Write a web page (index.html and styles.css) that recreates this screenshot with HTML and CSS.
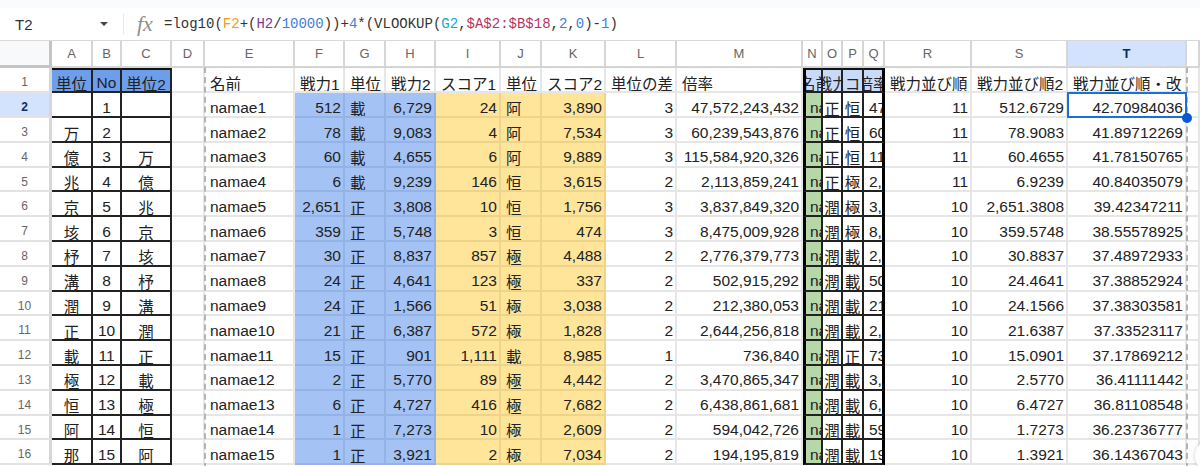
FILE: index.html
```html
<!DOCTYPE html>
<html lang="ja">

<head>
  <meta charset="UTF-8">
  <meta name="viewport" content="width=device-width, initial-scale=1.0">
  <title>Spreadsheet</title>
  <link rel="stylesheet" href="styles.css">
</head>

<body>
  <div class="top-band"></div>
  <div class="formula-bar">
    <div class="name-box">T2</div>
    <div class="name-arrow"></div>
    <div class="bar-sep"></div>
    <div class="fx">fx</div>
    <div class="formula">=log10(<span class="f-orange">F2</span>+(<span class="f-purple">H2</span>/<span class="f-blue">10000</span>))+<span class="f-blue">4</span>*(VLOOKUP(<span class="f-teal">G2</span>,<span class="f-red">$A$2:$B$18</span>,<span class="f-blue">2</span>,<span class="f-blue">0</span>)-<span class="f-blue">1</span>)</div>
  </div>

  <div class="sheet">
    <!-- column headers -->
    <div class="corner"></div>
    <div class="col">A</div><div class="col">B</div><div class="col">C</div><div class="col">D</div><div class="col">E</div><div class="col">F</div><div class="col">G</div><div class="col">H</div><div class="col">I</div><div class="col">J</div><div class="col">K</div><div class="col">L</div><div class="col">M</div><div class="col">N</div><div class="col">O</div><div class="col">P</div><div class="col">Q</div><div class="col">R</div><div class="col">S</div><div class="col col-on">T</div><div class="col"></div>

    <!-- row 1 -->
    <div class="row-no">1</div>
    <div class="c mid k k-top hd">単位</div><div class="c mid k k-top hd">No</div><div class="c mid k k-top hd">単位2</div><div class="c"></div>
    <div class="c">名前</div><div class="c">戦力1</div><div class="c">単位</div><div class="c">戦力2</div><div class="c">スコア1</div><div class="c">単位</div><div class="c">スコア2</div><div class="c">単位の差</div><div class="c">倍率</div>
    <div class="c mid k k-top k-left lb">名前</div><div class="c mid k k-top lb">戦力</div><div class="c mid k k-top lb">スコア</div><div class="c mid k k-top k-right lb">倍率</div>
    <div class="c">戦力並び順</div><div class="c">戦力並び順2</div><div class="c">戦力並び順・改</div><div class="c"></div>

    <!-- row 2 -->
    <div class="row-no row-on">2</div>
    <div class="c mid k"></div><div class="c mid k">1</div><div class="c mid k"></div><div class="c"></div>
    <div class="c">namae1</div><div class="c num bl">512</div><div class="c bl">載</div><div class="c num bl">6,729</div><div class="c num ye">24</div><div class="c ye">阿</div><div class="c num ye">3,890</div><div class="c num">3</div><div class="c num">47,572,243,432</div>
    <div class="c k k-left gr">namae1</div><div class="c mid k">正</div><div class="c mid k">恒</div><div class="c k k-right">47,572,243,432</div>
    <div class="c num">11</div><div class="c num">512.6729</div><div class="c num">42.70984036</div><div class="c"></div>

    <!-- row 3 -->
    <div class="row-no">3</div>
    <div class="c mid k">万</div><div class="c mid k">2</div><div class="c mid k"></div><div class="c"></div>
    <div class="c">namae2</div><div class="c num bl">78</div><div class="c bl">載</div><div class="c num bl">9,083</div><div class="c num ye">4</div><div class="c ye">阿</div><div class="c num ye">7,534</div><div class="c num">3</div><div class="c num">60,239,543,876</div>
    <div class="c k k-left gr">namae2</div><div class="c mid k">正</div><div class="c mid k">恒</div><div class="c k k-right">60,239,543,876</div>
    <div class="c num">11</div><div class="c num">78.9083</div><div class="c num">41.89712269</div><div class="c"></div>

    <!-- row 4 -->
    <div class="row-no">4</div>
    <div class="c mid k">億</div><div class="c mid k">3</div><div class="c mid k">万</div><div class="c"></div>
    <div class="c">namae3</div><div class="c num bl">60</div><div class="c bl">載</div><div class="c num bl">4,655</div><div class="c num ye">6</div><div class="c ye">阿</div><div class="c num ye">9,889</div><div class="c num">3</div><div class="c num">115,584,920,326</div>
    <div class="c k k-left gr">namae3</div><div class="c mid k">正</div><div class="c mid k">恒</div><div class="c k k-right">115,584,920,326</div>
    <div class="c num">11</div><div class="c num">60.4655</div><div class="c num">41.78150765</div><div class="c"></div>

    <!-- row 5 -->
    <div class="row-no">5</div>
    <div class="c mid k">兆</div><div class="c mid k">4</div><div class="c mid k">億</div><div class="c"></div>
    <div class="c">namae4</div><div class="c num bl">6</div><div class="c bl">載</div><div class="c num bl">9,239</div><div class="c num ye">146</div><div class="c ye">恒</div><div class="c num ye">3,615</div><div class="c num">2</div><div class="c num">2,113,859,241</div>
    <div class="c k k-left gr">namae4</div><div class="c mid k">正</div><div class="c mid k">極</div><div class="c k k-right">2,113,859,241</div>
    <div class="c num">11</div><div class="c num">6.9239</div><div class="c num">40.84035079</div><div class="c"></div>

    <!-- row 6 -->
    <div class="row-no">6</div>
    <div class="c mid k">京</div><div class="c mid k">5</div><div class="c mid k">兆</div><div class="c"></div>
    <div class="c">namae5</div><div class="c num bl">2,651</div><div class="c bl">正</div><div class="c num bl">3,808</div><div class="c num ye">10</div><div class="c ye">恒</div><div class="c num ye">1,756</div><div class="c num">3</div><div class="c num">3,837,849,320</div>
    <div class="c k k-left gr">namae5</div><div class="c mid k">潤</div><div class="c mid k">極</div><div class="c k k-right">3,837,849,320</div>
    <div class="c num">10</div><div class="c num">2,651.3808</div><div class="c num">39.42347211</div><div class="c"></div>

    <!-- row 7 -->
    <div class="row-no">7</div>
    <div class="c mid k">垓</div><div class="c mid k">6</div><div class="c mid k">京</div><div class="c"></div>
    <div class="c">namae6</div><div class="c num bl">359</div><div class="c bl">正</div><div class="c num bl">5,748</div><div class="c num ye">3</div><div class="c ye">恒</div><div class="c num ye">474</div><div class="c num">3</div><div class="c num">8,475,009,928</div>
    <div class="c k k-left gr">namae6</div><div class="c mid k">潤</div><div class="c mid k">極</div><div class="c k k-right">8,475,009,928</div>
    <div class="c num">10</div><div class="c num">359.5748</div><div class="c num">38.55578925</div><div class="c"></div>

    <!-- row 8 -->
    <div class="row-no">8</div>
    <div class="c mid k">杼</div><div class="c mid k">7</div><div class="c mid k">垓</div><div class="c"></div>
    <div class="c">namae7</div><div class="c num bl">30</div><div class="c bl">正</div><div class="c num bl">8,837</div><div class="c num ye">857</div><div class="c ye">極</div><div class="c num ye">4,488</div><div class="c num">2</div><div class="c num">2,776,379,773</div>
    <div class="c k k-left gr">namae7</div><div class="c mid k">潤</div><div class="c mid k">載</div><div class="c k k-right">2,776,379,773</div>
    <div class="c num">10</div><div class="c num">30.8837</div><div class="c num">37.48972933</div><div class="c"></div>

    <!-- row 9 -->
    <div class="row-no">9</div>
    <div class="c mid k">溝</div><div class="c mid k">8</div><div class="c mid k">杼</div><div class="c"></div>
    <div class="c">namae8</div><div class="c num bl">24</div><div class="c bl">正</div><div class="c num bl">4,641</div><div class="c num ye">123</div><div class="c ye">極</div><div class="c num ye">337</div><div class="c num">2</div><div class="c num">502,915,292</div>
    <div class="c k k-left gr">namae8</div><div class="c mid k">潤</div><div class="c mid k">載</div><div class="c k k-right">502,915,292</div>
    <div class="c num">10</div><div class="c num">24.4641</div><div class="c num">37.38852924</div><div class="c"></div>

    <!-- row 10 -->
    <div class="row-no">10</div>
    <div class="c mid k">潤</div><div class="c mid k">9</div><div class="c mid k">溝</div><div class="c"></div>
    <div class="c">namae9</div><div class="c num bl">24</div><div class="c bl">正</div><div class="c num bl">1,566</div><div class="c num ye">51</div><div class="c ye">極</div><div class="c num ye">3,038</div><div class="c num">2</div><div class="c num">212,380,053</div>
    <div class="c k k-left gr">namae9</div><div class="c mid k">潤</div><div class="c mid k">載</div><div class="c k k-right">212,380,053</div>
    <div class="c num">10</div><div class="c num">24.1566</div><div class="c num">37.38303581</div><div class="c"></div>

    <!-- row 11 -->
    <div class="row-no">11</div>
    <div class="c mid k">正</div><div class="c mid k">10</div><div class="c mid k">潤</div><div class="c"></div>
    <div class="c">namae10</div><div class="c num bl">21</div><div class="c bl">正</div><div class="c num bl">6,387</div><div class="c num ye">572</div><div class="c ye">極</div><div class="c num ye">1,828</div><div class="c num">2</div><div class="c num">2,644,256,818</div>
    <div class="c k k-left gr">namae10</div><div class="c mid k">潤</div><div class="c mid k">載</div><div class="c k k-right">2,644,256,818</div>
    <div class="c num">10</div><div class="c num">21.6387</div><div class="c num">37.33523117</div><div class="c"></div>

    <!-- row 12 -->
    <div class="row-no">12</div>
    <div class="c mid k">載</div><div class="c mid k">11</div><div class="c mid k">正</div><div class="c"></div>
    <div class="c">namae11</div><div class="c num bl">15</div><div class="c bl">正</div><div class="c num bl">901</div><div class="c num ye">1,111</div><div class="c ye">載</div><div class="c num ye">8,985</div><div class="c num">1</div><div class="c num">736,840</div>
    <div class="c k k-left gr">namae11</div><div class="c mid k">潤</div><div class="c mid k">正</div><div class="c k k-right">736,840</div>
    <div class="c num">10</div><div class="c num">15.0901</div><div class="c num">37.17869212</div><div class="c"></div>

    <!-- row 13 -->
    <div class="row-no">13</div>
    <div class="c mid k">極</div><div class="c mid k">12</div><div class="c mid k">載</div><div class="c"></div>
    <div class="c">namae12</div><div class="c num bl">2</div><div class="c bl">正</div><div class="c num bl">5,770</div><div class="c num ye">89</div><div class="c ye">極</div><div class="c num ye">4,442</div><div class="c num">2</div><div class="c num">3,470,865,347</div>
    <div class="c k k-left gr">namae12</div><div class="c mid k">潤</div><div class="c mid k">載</div><div class="c k k-right">3,470,865,347</div>
    <div class="c num">10</div><div class="c num">2.5770</div><div class="c num">36.41111442</div><div class="c"></div>

    <!-- row 14 -->
    <div class="row-no">14</div>
    <div class="c mid k">恒</div><div class="c mid k">13</div><div class="c mid k">極</div><div class="c"></div>
    <div class="c">namae13</div><div class="c num bl">6</div><div class="c bl">正</div><div class="c num bl">4,727</div><div class="c num ye">416</div><div class="c ye">極</div><div class="c num ye">7,682</div><div class="c num">2</div><div class="c num">6,438,861,681</div>
    <div class="c k k-left gr">namae13</div><div class="c mid k">潤</div><div class="c mid k">載</div><div class="c k k-right">6,438,861,681</div>
    <div class="c num">10</div><div class="c num">6.4727</div><div class="c num">36.81108548</div><div class="c"></div>

    <!-- row 15 -->
    <div class="row-no">15</div>
    <div class="c mid k">阿</div><div class="c mid k">14</div><div class="c mid k">恒</div><div class="c"></div>
    <div class="c">namae14</div><div class="c num bl">1</div><div class="c bl">正</div><div class="c num bl">7,273</div><div class="c num ye">10</div><div class="c ye">極</div><div class="c num ye">2,609</div><div class="c num">2</div><div class="c num">594,042,726</div>
    <div class="c k k-left gr">namae14</div><div class="c mid k">潤</div><div class="c mid k">載</div><div class="c k k-right">594,042,726</div>
    <div class="c num">10</div><div class="c num">1.7273</div><div class="c num">36.23736777</div><div class="c"></div>

    <!-- row 16 -->
    <div class="row-no">16</div>
    <div class="c mid k">那</div><div class="c mid k">15</div><div class="c mid k">阿</div><div class="c"></div>
    <div class="c">namae15</div><div class="c num bl">1</div><div class="c bl">正</div><div class="c num bl">3,921</div><div class="c num ye">2</div><div class="c ye">極</div><div class="c num ye">7,034</div><div class="c num">2</div><div class="c num">194,195,819</div>
    <div class="c k k-left gr">namae15</div><div class="c mid k">潤</div><div class="c mid k">載</div><div class="c k k-right">194,195,819</div>
    <div class="c num">10</div><div class="c num">1.3921</div><div class="c num">36.14367043</div><div class="c"></div>

    <!-- overlays -->
    <div class="freeze-line"></div>
    <div class="selection"><div class="handle"></div></div>
    <div class="explore"></div>
  </div>
</body>

</html>
```

FILE: styles.css
```css
html,
body {
  margin: 0;
  height: 466px;
  overflow: hidden;
  background: #fff;
}

body {
  font-family: "Liberation Sans", "Noto Sans CJK JP", sans-serif;
  color: #222;
}

.top-band {
  height: 8px;
  background: #f9fbfd;
}

.formula-bar {
  display: flex;
  align-items: center;
  height: 32px;
  border-bottom: 1px solid #d9d9d9;
}

.name-box {
  width: 85px;
  padding-left: 15px;
  font-size: 15px;
  color: #333;
}

.name-arrow {
  width: 0;
  height: 0;
  border-left: 4px solid transparent;
  border-right: 4px solid transparent;
  border-top: 4px solid #444;
}

.bar-sep {
  width: 1px;
  height: 20px;
  margin-left: 15px;
  background: #e6e6e6;
}

.fx {
  width: 27px;
  margin-left: 13px;
  font-family: "Liberation Serif", serif;
  font-size: 22px;
  font-style: italic;
  color: #8f8f8f;
}

.formula {
  font-family: "Liberation Mono", monospace;
  font-size: 14px;
  white-space: nowrap;
  color: #333;
}

.f-orange { color: #f7981d; }
.f-purple { color: #7e3794; }
.f-blue { color: #3d7fd9; }
.f-teal { color: #11a9cc; }
.f-red { color: #b5345f; }

.sheet {
  position: relative;
  display: grid;
  grid-template-columns: 52px 41px 29px 50px 33px 90px 50px 41px 50px 65px 41px 64px 71px 126px 20px 20px 21px 21px 87px 96px 119px 13px;
  grid-template-rows: 27px 25.3px repeat(15, 24.8px);
  font-size: 15.5px;
}

.corner {
  box-sizing: border-box;
  background: #f8f9fa;
  border-right: 3px solid #c4c4c4;
  border-bottom: 3px solid #c4c4c4;
}

.col {
  display: flex;
  align-items: center;
  justify-content: center;
  box-sizing: border-box;
  border-right: 2px solid #d6d6d6;
  border-bottom: 2px solid #d6d6d6;
  font-size: 13px;
  color: #666;
}

.col-on {
  background: #d3e3fd;
  color: #0b2e5c;
  font-weight: bold;
}

.row-no {
  display: flex;
  align-items: center;
  justify-content: center;
  box-sizing: border-box;
  padding-top: 5px;
  border-right: 3px solid #d6d6d6;
  border-bottom: 2px solid #e2e2e2;
  font-size: 12px;
  color: #666;
}

.row-on {
  background: #d3e3fd;
  color: #0b2e5c;
  font-weight: bold;
}

.c {
  display: flex;
  align-items: center;
  box-sizing: border-box;
  padding: 6px 2px 0 5px;
  overflow: hidden;
  white-space: nowrap;
  border-right: 2px solid #e6e6e6;
  border-bottom: 2px solid #e6e6e6;
}

.num {
  justify-content: flex-end;
}

.mid {
  justify-content: center;
  padding: 6px 0 0;
}

.bl {
  background: #a4c2f4;
  border-color: #93b3e6;
}

.ye {
  background: #ffe599;
  border-color: #eed48a;
}

.gr {
  background: #b6d7a8;
}

.lb {
  background: #c9daf8;
}

.hd {
  background: #6d9eeb;
}

.k {
  border-color: #222;
}

.k-top {
  border-top: 2px solid #111;
  padding-top: 4px;
}

.k-left {
  border-left: 3px solid #000;
  padding-left: 4px;
}

.k-right {
  border-right: 3px solid #000;
}

/* frozen pane edge, runs under the header row and down past the last row */
.freeze-line {
  position: absolute;
  grid-column: 6 / 22;
  grid-row: 2 / 18;
  top: -1px;
  left: -1px;
  right: -1px;
  bottom: -4px;
  border: 2px dashed #b4b4b4;
  border-top: 1px dashed #cfcfcf;
  border-bottom: none;
  pointer-events: none;
}

.selection {
  position: absolute;
  grid-column: 21 / 22;
  grid-row: 3 / 4;
  top: -1px;
  left: -1px;
  right: 0;
  bottom: 0;
  border: 2px solid #1a6fe0;
}

.handle {
  position: absolute;
  right: -7px;
  bottom: -7px;
  width: 10px;
  height: 10px;
  border-radius: 50%;
  background: #0b57d0;
}

.explore {
  position: absolute;
  left: 1195px;
  top: 398px;
  width: 34px;
  height: 34px;
  border-radius: 50%;
  background: #fff;
  box-shadow: 0 0 4px rgba(0, 0, 0, 0.2);
}
```
